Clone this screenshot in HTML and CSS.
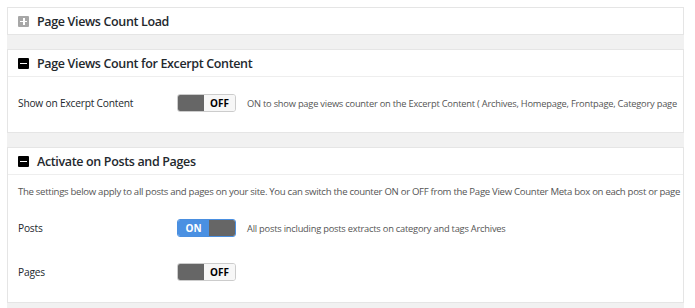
FILE: index.html
```html
<!DOCTYPE html>
<html lang="en">
<head>
    <meta charset="UTF-8">
    <title>Page Views Count Settings</title>
    <link rel="stylesheet" href="styles.css">
</head>
<body>

<div class="settings">

    <div class="panel">
        <div class="panel-head closed">
            <span class="toggle-icon plus"></span>
            <h3>Page Views Count Load</h3>
        </div>
    </div>

    <div class="panel">
        <div class="panel-head">
            <span class="toggle-icon minus"></span>
            <h3>Page Views Count for Excerpt Content</h3>
        </div>
        <div class="panel-body single">
            <div class="row">
                <label>Show on Excerpt Content</label>
                <span class="switch off"><span class="knob"></span><span class="state">OFF</span></span>
                <span class="desc">ON to show page views counter on the Excerpt Content ( Archives, Homepage, Frontpage, Category page</span>
            </div>
        </div>
    </div>

    <div class="panel">
        <div class="panel-head">
            <span class="toggle-icon minus"></span>
            <h3>Activate on Posts and Pages</h3>
        </div>
        <div class="panel-body">
            <p class="intro">The settings below apply to all posts and pages on your site. You can switch the counter ON or OFF from the Page View Counter Meta box on each post or page</p>
            <div class="row">
                <label>Posts</label>
                <span class="switch on"><span class="state">ON</span><span class="knob"></span></span>
                <span class="desc">All posts including posts extracts on category and tags Archives</span>
            </div>
            <div class="row">
                <label>Pages</label>
                <span class="switch off"><span class="knob"></span><span class="state">OFF</span></span>
            </div>
        </div>
    </div>

</div>

</body>
</html>
```

FILE: styles.css
```css
body {
    margin: 0;
    background-color: #fff;
    font-family: "Open Sans", Arial, sans-serif;
    color: #23282d;
}
.settings {
    width: 677px;
    margin: 7px 0 0 7px;
    padding-bottom: 7px;
    background-color: #f1f1f1;
    overflow: hidden;
}
.panel {
    background-color: #fff;
    border: 1px solid #e5e5e5;
    margin-bottom: 14px;
}
.panel:last-child {
    margin-bottom: 0;
}
.panel-head {
    display: flex;
    align-items: center;
    height: 26px;
    padding: 0 10px;
    border-bottom: 1px solid #eee;
}
.panel-head.closed {
    border-bottom: none;
}
.panel-head h3 {
    margin: 0;
    font-size: 12.5px;
    font-weight: 600;
    letter-spacing: -0.35px;
    white-space: nowrap;
}
.toggle-icon {
    position: relative;
    width: 11px;
    height: 11px;
    margin-right: 8px;
    border-radius: 1px;
    flex-shrink: 0;
}
.toggle-icon.plus {
    background-color: #a7a7a7;
}
.toggle-icon.minus {
    background-color: #000;
}
.toggle-icon::before,
.toggle-icon::after {
    content: "";
    position: absolute;
    background-color: #fff;
}
.toggle-icon::before {
    left: 2px;
    right: 2px;
    top: 5px;
    height: 1.5px;
}
.toggle-icon.plus::after {
    top: 2px;
    bottom: 2px;
    left: 5px;
    width: 1.5px;
}
.panel-body {
    padding: 10px 10px 21px;
}
.panel-body.single {
    padding: 17px 10px 20px;
}
.intro {
    margin: 0 0 21px;
    font-size: 9.6px;
    letter-spacing: -0.3px;
    color: #555;
    white-space: nowrap;
}
.row {
    display: flex;
    align-items: center;
    height: 18px;
    margin: 0 0 26px;
    white-space: nowrap;
}
.row:last-child {
    margin-bottom: 0;
}
.row label {
    width: 159px;
    flex-shrink: 0;
    font-size: 10.2px;
    letter-spacing: -0.2px;
    color: #23282d;
}
.switch {
    display: flex;
    flex-shrink: 0;
    width: 59px;
    height: 18px;
    border-radius: 3px;
    overflow: hidden;
    border: 1px solid #ccc;
    box-sizing: border-box;
    font-size: 10px;
    font-weight: 700;
}
.switch .knob {
    width: 26px;
    background-color: #666;
}
.switch .state {
    flex: 1;
    display: flex;
    align-items: center;
    justify-content: center;
}
.switch.off .state {
    background-color: #f7f7f7;
    color: #000;
}
.switch.on {
    border-color: #4a8fe0;
}
.switch.on .state {
    background-color: #4a90e2;
    color: #fff;
}
.desc {
    flex-shrink: 0;
    margin-left: 11px;
    font-size: 9.3px;
    letter-spacing: -0.22px;
    color: #555;
}
```
